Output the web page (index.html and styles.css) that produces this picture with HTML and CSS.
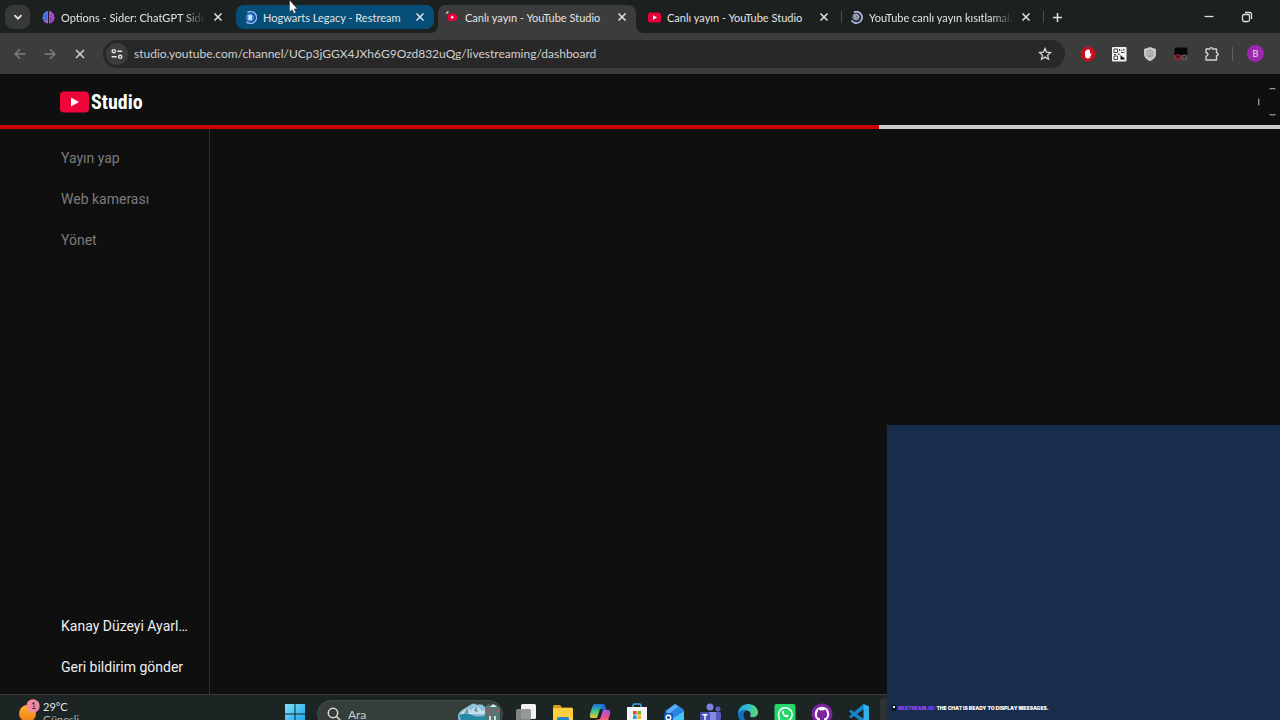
FILE: index.html
```html
<!DOCTYPE html>
<html lang="tr">
  <head>
    <meta charset="UTF-8" />
    <meta name="viewport" content="width=device-width, initial-scale=1.0" />
    <title>Canlı yayın - YouTube Studio</title>
    <link rel="stylesheet" href="styles.css">
  </head>
  <body>
    <!-- Browser tabs -->
    <div class="tabstrip">
      <button class="tab-search" aria-label="Sekmelerde ara">
        <svg width="10" height="10" viewBox="0 0 10 10"><path d="M1.500 3.200 5 6.700l3.500-3.500" fill="none" stroke="#e3e3e3" stroke-width="1.700"/></svg>
      </button>

      <div class="tab">
        <svg class="favicon" viewBox="0 0 13 13">
          <path d="M6 .6C4.500 0 3 .6 2.700 2 1.200 2.300.7 3.800 1.200 4.900 0 6 .2 8 1.300 8.700c-.1 1.500.9 2.500 2.100 2.500C4 12.700 5.500 12.700 6 12z" fill="#4d7df0"/>
          <path d="M7 .6C8.500 0 10 .6 10.300 2c1.500.3 2 1.800 1.500 2.900C13 6 12.800 8 11.700 8.700c.1 1.500-.9 2.500-2.100 2.500C9 12.700 7.500 12.700 7 12z" fill="#b44be0"/>
          <path d="M2.500 5.500 5 4M2.500 8.500 5 7M10.500 5.500 8 4M10.500 8.500 8 7M4.500 10.500V9M8.500 10.500V9" stroke="#2b1a55" stroke-width=".6" fill="none"/>
          <path d="M3 10c.5 1.500 2 2 3 1.500V9z" fill="#e0559c"/>
        </svg>
        <a href="#" class="tab-title fade">Options - Sider: ChatGPT Sidebar</a>
        <button class="tab-close" aria-label="Kapat"><svg width="10" height="10" viewBox="0 0 10 10"><path d="m1.500 1.500 7 7m0-7-7 7"/></svg></button>
      </div>

      <div class="tab grouped">
        <svg class="favicon" viewBox="0 0 13 13">
          <path d="M3.500 1.300A6 6 0 1 1 2.300 10.700" fill="none" stroke="#8fb8f5" stroke-width="1.400"/>
          <circle cx="6" cy="6.500" r="4.200" fill="#3f86e8"/>
          <path d="M4.300 4h2.600a1.500 1.500 0 0 1 .8 2.700L8.200 9H4.300z" fill="#cfe2ff"/>
        </svg>
        <a href="#" class="tab-title">Hogwarts Legacy - Restream</a>
        <button class="tab-close" aria-label="Kapat"><svg width="10" height="10" viewBox="0 0 10 10"><path d="m1.500 1.500 7 7m0-7-7 7"/></svg></button>
      </div>

      <div class="tab active">
        <svg class="favicon" viewBox="0 0 13 13">
          <path d="M.3 2.600A6 6 0 0 1 2.500.7" fill="none" stroke="#ddd" stroke-width="1.300"/>
          <rect x="1.500" y="2.500" width="9.500" height="7.500" rx="3" fill="#e5003c"/>
          <path d="m5.200 4.600 3 1.700-3 1.700z" fill="#fff"/>
        </svg>
        <a href="#" class="tab-title">Canlı yayın - YouTube Studio</a>
        <button class="tab-close" aria-label="Kapat"><svg width="10" height="10" viewBox="0 0 10 10"><path d="m1.500 1.500 7 7m0-7-7 7"/></svg></button>
      </div>

      <div class="tab divided">
        <svg class="favicon" viewBox="0 0 13 13">
          <rect x="0" y="1.500" width="13" height="10" rx="2.500" fill="#e5003c"/>
          <path d="m5 4.200 4 2.300-4 2.300z" fill="#fff"/>
        </svg>
        <a href="#" class="tab-title">Canlı yayın - YouTube Studio</a>
        <button class="tab-close" aria-label="Kapat"><svg width="10" height="10" viewBox="0 0 10 10"><path d="m1.500 1.500 7 7m0-7-7 7"/></svg></button>
      </div>

      <div class="tab divided">
        <svg class="favicon" viewBox="0 0 13 13">
          <path d="M4 1.200A5.700 5.700 0 1 1 1.500 9.300" fill="none" stroke="#b9c6ee" stroke-width="1.600"/>
          <circle cx="6" cy="6" r="3.800" fill="#6b7484"/>
          <path d="M3.500 5c1.500-1.500 4-1.500 4.800.2S6.500 8.500 5 7.500s0-2.300 1.200-2" fill="none" stroke="#d8dde6" stroke-width=".8"/>
        </svg>
        <a href="#" class="tab-title fade">YouTube canlı yayın kısıtlamaları</a>
        <button class="tab-close" aria-label="Kapat"><svg width="10" height="10" viewBox="0 0 10 10"><path d="m1.500 1.500 7 7m0-7-7 7"/></svg></button>
      </div>

      <button class="new-tab" aria-label="Yeni sekme">
        <svg width="11" height="11" viewBox="0 0 11 11"><path d="M5.500 1v9M1 5.500h9" stroke="#e3e3e3" stroke-width="1.500"/></svg>
      </button>

      <div class="window-controls">
        <button aria-label="Küçült"><svg width="12" height="12" viewBox="0 0 12 12"><path d="M1.500 5.500h9" stroke="#ddd" stroke-width="1.300"/></svg></button>
        <button aria-label="Geri yükle"><svg width="12" height="12" viewBox="0 0 12 12" fill="none" stroke="#ddd" stroke-width="1.300"><rect x="1.500" y="3.500" width="7" height="7" rx="1.500"/><path d="M4 1.500h4.500a2 2 0 0 1 2 2V8"/></svg></button>
      </div>
    </div>

    <!-- Address bar and extensions -->
    <div class="toolbar">
      <button class="tool-button dim" aria-label="Geri"><svg width="12" height="12" viewBox="0 0 12 12"><path d="M11.500 6H1.200M6 1.200 1.200 6 6 10.800"/></svg></button>
      <button class="tool-button dim" aria-label="İleri"><svg width="12" height="12" viewBox="0 0 12 12"><path d="M.5 6h10.300M6 1.200 10.800 6 6 10.800"/></svg></button>
      <button class="tool-button" aria-label="Durdur"><svg width="12" height="12" viewBox="0 0 12 12"><path d="m2 2 8 8m0-8-8 8"/></svg></button>

      <div class="omnibox">
        <button class="site-info" aria-label="Site bilgileri">
          <svg width="12" height="12" viewBox="0 0 12 12" fill="none" stroke="#e3e3e3" stroke-width="1.400"><circle cx="2.800" cy="3.200" r="1.600"/><path d="M6.300 3.200h5M.7 8.800h5"/><circle cx="9.200" cy="8.800" r="1.600"/></svg>
        </button>
        <input type="text" class="url" aria-label="Adres" value="studio.youtube.com/channel/UCp3jGGX4JXh6G9Ozd832uQg/livestreaming/dashboard" />
        <button class="bookmark" aria-label="Yer işareti">
          <svg width="14" height="14" viewBox="0 0 14 14"><path d="m7 1.500 1.600 3.700 4 .3-3 2.700.9 4L7 10.100l-3.500 2.100.9-4-3-2.700 4-.3z" fill="none" stroke="#d4d4d4" stroke-width="1.300"/></svg>
        </button>
      </div>

      <div class="extensions">
        <button aria-label="AdBlock">
          <svg width="16" height="16" viewBox="0 0 16 16"><path d="M5 .7h6L15.300 5v6L11 15.300H5L.7 11V5z" fill="#c4101f"/><path d="M5 8V5.300q.6-.8 1.200 0V4.200q.6-.8 1.200 0V3.500q.7-.8 1.300 0v.7q.7-.7 1.300.1V8l.7-.7q1-.2.8.7L10 11.600q-.6 1-2 1-2.600 0-3-2.600z" fill="#fff"/></svg>
        </button>
        <button aria-label="QR kodu">
          <svg width="16" height="16" viewBox="0 0 16 16"><rect x="1" y="1" width="14.500" height="14.500" rx="1" fill="#f2f2f2"/><path d="M3 3h3.500v3.500H3zM3 10h3.500v3.500H3z" fill="none" stroke="#444" stroke-width="1"/><path d="M8 3h1.200v2H8zM10 4h1v1h-1zM12 3h1.500v1.500H12zM10 6h3.500v1H10zM3 8h2v1H3zM7 7.500h1.500V9H7z" fill="#444"/><path d="M9.500 9v4.500h4.300q-.3-2.500-2.300-2.500z" fill="#111"/></svg>
        </button>
        <button aria-label="Koruma">
          <svg width="16" height="16" viewBox="0 0 16 16"><path d="m8 1 6 2v5c0 3.500-3 6-6 7.200C5 14 2 11.500 2 8V3z" fill="#c4c8cb"/><circle cx="8" cy="7.500" r="3.200" fill="none" stroke="#969ca0"/><path d="M9.200 6.200q-2-.7-2.300.5t1.300.9.8 1.500-2.300.3" fill="none" stroke="#8b9196" stroke-width=".9"/></svg>
        </button>
        <button aria-label="Kayıt">
          <svg width="16" height="16" viewBox="0 0 16 16"><path d="M1.500 3.500q0-2 2-2h9q2 0 2 2V9h-13z" fill="#050505"/><path d="M1.500 9h7v5.500h-6q-1 0-1-1z" fill="#7d2a38"/><path d="M8.500 9h6v4.500q0 1-1 1h-5z" fill="#454545"/><circle cx="5" cy="10.800" r="2.300" fill="#48131c" stroke="#a52a3c"/><circle cx="11.400" cy="11.200" r="2.300" fill="#333" stroke="#6a6a6a"/></svg>
        </button>
        <button aria-label="Uzantılar">
          <svg width="16" height="16" viewBox="0 0 16 16"><path d="M2 3h3.800q.3-1.400 1.500-1.400T8.800 3h3.700v3.700q1.700.2 1.700 1.500t-1.700 1.500V14H2v-3.900q1.900-.1 1.900-1.700T2 6.800z" fill="none" stroke="#d2d2d2" stroke-width="1.400" stroke-linejoin="round"/></svg>
        </button>
      </div>
      <button class="avatar">B</button>
    </div>

    <!-- Studio header -->
    <header class="studio-header">
      <a href="#" class="logo">
        <svg width="29" height="22" viewBox="0 0 29 22"><rect x="0" y="0.500" width="29" height="21" rx="4" fill="#f00538"/><path d="m11 6.500 8 4.500-8 4.500z" fill="#fff"/></svg>
        <span>Studio</span>
      </a>
      <svg width="22" height="30" viewBox="0 0 22 30" fill="none" stroke="#c8c8c8" stroke-linecap="round"><path d="M.8 12v6"/><path d="M12 1.800q2.500-.6 5 0M12 27.700q2.500.6 5 0"/></svg>
    </header>
    <div class="progress"><div class="progress-bar" style="width: 68.7%"></div></div>

    <div class="studio">
      <nav class="sidebar">
        <a href="#" class="menu-item">Yayın yap</a>
        <a href="#" class="menu-item">Web kamerası</a>
        <a href="#" class="menu-item">Yönet</a>
        <a href="#" class="menu-item bottom">Kanay Düzeyi Ayarl…</a>
        <a href="#" class="menu-item bright">Geri bildirim gönder</a>
      </nav>
      <main class="content"></main>
    </div>

    <!-- Windows taskbar -->
    <footer class="taskbar">
      <button class="weather">
        <svg width="24" height="26" viewBox="0 0 24 26">
          <defs><linearGradient id="sun" x2="0" y2="1"><stop stop-color="#ffb52e"/><stop offset="1" stop-color="#f07a12"/></linearGradient></defs>
          <circle cx="9.500" cy="15.500" r="8.500" fill="url(#sun)"/><circle cx="15" cy="8" r="6.700" fill="#f58a9e"/>
          <text x="13" y="11" class="badge-count">1</text>
        </svg>
        <span class="weather-text"><span>29°C</span><span class="weather-state">Güneşli</span></span>
      </button>

      <div class="apps">
        <button class="app" aria-label="Başlat">
          <svg viewBox="0 0 22 22"><defs><linearGradient id="win" x2="1" y2="1"><stop stop-color="#7fe0fb"/><stop offset="1" stop-color="#129fe8"/></linearGradient></defs><path d="M1 1h9.500v9.500H1zM11.500 1H21v9.500h-9.500zM1 11.500h9.500V21H1zM11.500 11.500H21V21h-9.500z" fill="url(#win)"/></svg>
        </button>
        <label class="search">
          <svg class="search-icon" viewBox="0 0 14 14"><circle cx="6" cy="6" r="4.700"/><path d="m9.500 9.500 3.700 3.700"/></svg>
          <input type="text" placeholder="Ara" />
          <svg class="search-art" viewBox="0 0 44 24">
            <path d="M0 13C3 7 8 6 12 3q4-3 7 0 5-2 8 2l4 3v16H4Q0 20 0 13z" fill="#8dc0d8"/>
            <path d="M2 12 9 6l4 3 5-6 6 6 4-2v5H2z" fill="#c4dfea"/><path d="m9 6 2 5-5 1zM18 3l2 7-4-1z" fill="#7397ab"/>
            <path d="M1 13q7-3 13 0t14 0v11H5z" fill="#278aa4"/>
            <path d="m27 5 4-3 4 3 2-3 5 4v18H27z" fill="#557772"/><path d="M28 8h5M37 9h5M30 12h4" stroke="#b0505c" stroke-width="1.500"/><path d="M31 14h2v6h-2zM36 14h2v6h-2z" fill="#cfd8d8"/><path d="m32 5 3-3 4 3" fill="#dfe9ec"/>
          </svg>
        </label>
        <button class="app" aria-label="Görev görünümü">
          <svg viewBox="0 0 22 22"><rect x="6" y="1" width="15" height="15" rx="1.500" fill="#f1f1f1"/><rect x="1" y="6" width="15" height="14" rx="1.500" fill="#8c8f8f" opacity=".9"/></svg>
        </button>
        <button class="app" aria-label="Dosya Gezgini">
          <svg viewBox="0 0 22 22"><path d="M1 3.500Q1 2 2.500 2H8l2 2.500h9.500Q21 4.500 21 6v5H1z" fill="#d79a1a"/><rect x="1" y="5" width="20" height="15" rx="1.500" fill="#fbce3f"/><path d="M5 20v-4q0-2 2-2h8q2 0 2 2v4z" fill="#1c83d3"/></svg>
        </button>
        <button class="app" aria-label="Copilot">
          <svg viewBox="0 0 22 22"><defs><linearGradient id="cpa" x2="0" y2="1"><stop stop-color="#1b6fe0"/><stop offset=".5" stop-color="#3cc58c"/><stop offset="1" stop-color="#f3c631"/></linearGradient><linearGradient id="cpb" x2="0" y2="1"><stop stop-color="#9a58ec"/><stop offset=".5" stop-color="#ef4d91"/><stop offset="1" stop-color="#fb8d45"/></linearGradient></defs><path d="M6 1h7q2 0 2.500 2l.5 2-5 1-3 9H3q-3 0-2-4L3.500 3Q4 1 6 1z" fill="url(#cpa)"/><path d="M16 21H9q-2 0-2.500-2L6 17l5-1 3-9h5q3 0 2 4l-2.500 8q-.5 2-2.500 2z" fill="url(#cpb)"/><path d="M12 1h2q2 0 2.500 3l1 3h-4z" fill="#2468d8"/></svg>
        </button>
        <button class="app" aria-label="Microsoft Store">
          <svg viewBox="0 0 22 22"><path d="M7 5V2.500Q7 1 8.500 1h5Q15 1 15 2.500V5" fill="none" stroke="#2aa8e8" stroke-width="1.600"/><path d="M1 4h20v14q0 3-3 3H4q-3 0-3-3z" fill="#f3f5f6"/><path d="M7 8h3.600v3.600H7z" fill="#e84e28"/><path d="M11.400 8H15v3.600h-3.600z" fill="#79b51c"/><path d="M7 12.400h3.600V16H7z" fill="#1c9fe4"/><path d="M11.400 12.400H15V16h-3.600z" fill="#f7b50c"/></svg>
        </button>
        <button class="app" aria-label="Outlook">
          <svg viewBox="0 0 22 22"><path d="M2 8 12 1l9 6v12q0 2-2 2H4q-2 0-2-2z" fill="#1d66cf"/><path d="M3 8 12 1l4 2.500L5 12z" fill="#59aff4"/><path d="m16 3.500 5 3.500L9 16l-4-4z" fill="#2b83e8"/><path d="m21 8-12 8 4 5h6q2 0 2-2z" fill="#43c5f4"/><rect x="1" y="10" width="9" height="9" rx="1.500" fill="#1458b8"/><circle cx="5.500" cy="14.500" r="2.300" fill="none" stroke="#fff" stroke-width="1.400"/></svg>
        </button>
        <button class="app" aria-label="Teams">
          <svg viewBox="0 0 22 22"><circle cx="10" cy="4" r="3.500" fill="#7d80dd"/><circle cx="18" cy="6" r="2.500" fill="#5b5fc7"/><path d="M13 9h6.500Q21 9 21 10.500V15q0 4-4 4h-4z" fill="#5459be"/><path d="M5 9h11v8q0 4-5 4t-6-4z" fill="#8589e8"/><rect x="0" y="9" width="10" height="10" rx="1.500" fill="#4950b5"/><path d="M2.500 11.700h5M5 11.700V17" stroke="#fff" stroke-width="1.400"/></svg>
        </button>
        <button class="app" aria-label="Edge">
          <svg viewBox="0 0 22 22"><defs><linearGradient id="edge" x2="1"><stop stop-color="#249ee4"/><stop offset=".55" stop-color="#35bfc9"/><stop offset="1" stop-color="#61db62"/></linearGradient></defs><path d="M1 11C1 5 5.500 1 11.200 1 17 1 21 5 21 9.500c0 3-2.400 4.800-5.200 4.800-2 0-3-.8-2.500-1.800 1-2-.4-5-4-5C5 7.500 1.500 9.500 1 13z" fill="url(#edge)"/><path d="M1 11c1-3 5-4.500 8-3-3 1.500-3 5-1.500 8 1.500 2.600 5 4 8.500 3.200C9.500 23.500 1 19 1 11z" fill="#1470c6"/></svg>
        </button>
        <button class="app" aria-label="WhatsApp">
          <svg viewBox="0 0 22 22"><rect x="0.500" y="1" width="21" height="21" rx="2" fill="#21d767"/><path d="m4.500 18.500 1-3.500a6.800 6.800 0 1 1 2.600 2.500z" fill="none" stroke="#fff" stroke-width="1.500"/><path d="M8.300 8q.8-1 1.400 0l.5 1.300-.6.8q.8 1.600 2.400 2.300l.8-.8 1.700.8q.2 1.500-1.300 1.900c-2.700.3-6-3.300-4.900-6.300z" fill="#fff"/></svg>
        </button>
        <button class="app" aria-label="GitHub">
          <svg viewBox="0 0 22 22"><circle cx="11" cy="11" r="10.500" fill="#7b249b"/><circle cx="11" cy="11" r="7.300" fill="#fff"/><path d="M9 19v-3.500Q5.800 15 5.800 11.500q0-1.700 1-2.700-.3-1.200.2-2.300 1.200.1 2.200.9 1.800-.4 3.600 0 1-.8 2.200-.9.500 1.100.2 2.300 1 1 1 2.700 0 3.500-3.200 4V19z" fill="#7b249b"/></svg>
        </button>
        <button class="app" aria-label="Visual Studio Code">
          <svg viewBox="0 0 22 22"><path d="m15.500 1 5.500 2.500v15L15.500 21 1 8.500l2-1.800L16 16V6L3 15.300l-2-1.800z" fill="#1686cf"/><path d="m15.500 1 5.500 2.500v15L15.500 21z" fill="#35aef2"/></svg>
        </button>
        <button class="app running" aria-label="OBS Studio"></button>
      </div>
    </footer>

    <!-- Stream chat overlay -->
    <aside class="chat">
      <svg width="4" height="6" viewBox="0 0 4 6"><rect width="4" height="6" rx="1" fill="#07101e"/><path d="M1 1h2v2H1z" fill="#eee"/></svg>
      <p><span class="chat-author">RESTREAM.IO:</span> THE CHAT IS READY TO DISPLAY MESSAGES.</p>
    </aside>

    <svg class="cursor" width="12" height="16" viewBox="0 0 12 16"><path d="M.5 0v12l2.700-2.300L5 13.500l2-.9-1.800-3.700h3.300z" fill="#fff" stroke="#222" stroke-width=".5"/></svg>
  </body>
</html>
```
FILE: styles.css
```css
* {
  box-sizing: border-box;
}

body {
  margin: 0;
  height: 100vh;
  display: flex;
  flex-direction: column;
  overflow: hidden;
  position: relative;
  background-color: #0f0f0f;
  color: #e3e3e3;
  font-family: Lato, sans-serif;
  font-size: 11px;
}

button {
  display: flex;
  align-items: center;
  justify-content: center;
  padding: 0;
  border: none;
  background: none;
  color: inherit;
  font: inherit;
}

a {
  color: inherit;
  text-decoration: none;
}

svg {
  flex-shrink: 0;
}

/* Tab strip */
.tabstrip {
  height: 33px;
  flex-shrink: 0;
  display: flex;
  align-items: flex-start;
  gap: 4px;
  padding: 5px 19px 0 5px;
  background-color: #1c211f;
}

.tab-search {
  width: 25px;
  height: 24px;
  border-radius: 8px;
  background-color: #363938;
}

.tab {
  width: 198px;
  height: 24px;
  display: flex;
  align-items: center;
  gap: 6px;
  padding: 0 7px 0 8px;
  border-radius: 8px;
  position: relative;
}

.favicon {
  width: 13px;
  height: 13px;
}

.tab-title {
  flex: 1;
  overflow: hidden;
  white-space: nowrap;
}

.tab-title.fade {
  mask-image: linear-gradient(to right, #000 85%, transparent);
}

.tab-close {
  width: 14px;
  height: 14px;
}

.tab-close path {
  stroke: #e3e3e3;
  stroke-width: 1.5;
}

.tab.grouped {
  background-color: #064e78;
}

.tab.active {
  height: 28px;
  padding-bottom: 4px;
  border-radius: 8px 8px 0 0;
  background-color: #3c3c3c;
}

.tab.active::before,
.tab.active::after {
  content: "";
  position: absolute;
  bottom: 0;
  width: 8px;
  height: 8px;
}

.tab.active::before {
  right: 100%;
  background: radial-gradient(circle at 0 0, transparent 8px, #3c3c3c 8px);
}

.tab.active::after {
  left: 100%;
  background: radial-gradient(circle at 100% 0, transparent 8px, #3c3c3c 8px);
}

.tab.divided::after {
  content: "";
  position: absolute;
  right: -4px;
  width: 1px;
  height: 12px;
  background-color: #4a4d4c;
}

.new-tab {
  width: 26px;
  height: 24px;
}

.window-controls {
  margin-left: auto;
  display: flex;
  gap: 10px;
}

.window-controls button {
  width: 28px;
  height: 24px;
}

/* Toolbar */
.toolbar {
  height: 41px;
  flex-shrink: 0;
  display: flex;
  align-items: center;
  padding: 0 9px 0 5px;
  background-color: #3c3c3c;
}

.tool-button {
  width: 30px;
  height: 28px;
}

.tool-button path {
  fill: none;
  stroke: #d4d4d4;
  stroke-width: 1.5;
}

.tool-button.dim path {
  stroke: #7d7d7d;
}

.omnibox {
  flex: 1;
  height: 28px;
  display: flex;
  align-items: center;
  gap: 6px;
  margin: 0 7px 0 8px;
  padding: 0 13px 0 3px;
  border-radius: 14px;
  background-color: #282828;
}

.site-info {
  width: 22px;
  height: 22px;
  border-radius: 11px;
  background-color: #3c3c3c;
}

.url {
  flex: 1;
  min-width: 0;
  padding: 0;
  border: none;
  outline: none;
  background: none;
  color: #d0d0d0;
  font-family: Lato, sans-serif;
  font-size: 12px;
}

.extensions {
  display: flex;
}

.extensions button {
  width: 31px;
  height: 28px;
}

.avatar {
  width: 17px;
  height: 17px;
  margin: 0 7px 0 20px;
  border-radius: 50%;
  background-color: #9c27b0;
  font-size: 9px;
  position: relative;
}

.avatar::before {
  content: "";
  position: absolute;
  left: -15px;
  width: 1px;
  height: 14px;
  background-color: #5f6163;
}

/* Studio header */
.studio-header {
  height: 51px;
  flex-shrink: 0;
  display: flex;
  align-items: center;
  justify-content: space-between;
  padding: 4px 0 0 60px;
}

.logo {
  display: flex;
  align-items: center;
  gap: 2px;
  color: #fff;
  font-family: "Liberation Sans Narrow", "Roboto Condensed", Roboto, sans-serif;
  font-size: 20px;
  font-weight: bold;
  line-height: 24px;
}

.progress {
  height: 4px;
  flex-shrink: 0;
  background-color: #ccc;
}

.progress-bar {
  height: 100%;
  background-color: #cc0000;
}

/* Studio body */
.studio {
  flex: 1;
  min-height: 0;
  display: flex;
}

.sidebar {
  width: 210px;
  display: flex;
  flex-direction: column;
  padding: 9px 0 6px;
  border-right: 1px solid #303030;
  font-family: Roboto, sans-serif;
  font-size: 14px;
}

.menu-item {
  padding: 0 20px 0 61px;
  line-height: 41px;
  white-space: nowrap;
  color: #7c7c7c;
}

.menu-item.bottom {
  margin-top: auto;
  color: #eee;
}

.menu-item.bright {
  color: #eee;
}

.content {
  flex: 1;
}

/* Taskbar */
.taskbar {
  height: 26px;
  flex-shrink: 0;
  display: flex;
  align-items: flex-start;
  overflow: hidden;
  border-top: 1px solid #343c3a;
  background-color: #1c2523;
}

.weather {
  width: 276px;
  height: 40px;
  flex-shrink: 0;
  align-items: flex-start;
  justify-content: flex-start;
  gap: 1px;
  padding: 3px 0 0 18px;
}

.badge-count {
  fill: #4a1c28;
  font-size: 9px;
}

.weather-text {
  display: flex;
  flex-direction: column;
  padding-top: 2px;
  line-height: 13px;
  text-align: left;
}

.weather-state {
  color: #aab0ae;
}

.apps {
  display: flex;
}

.app {
  width: 37px;
  height: 38px;
}

.app svg {
  width: 22px;
  height: 22px;
}

.app.running {
  border-radius: 4px;
  margin: 3px 0 0 3px;
  background-color: #2c3431;
}

.search {
  width: 186px;
  height: 28px;
  display: flex;
  align-items: center;
  gap: 7px;
  margin: 5px 4px 0;
  padding-left: 9px;
  border: 1px solid #454c4a;
  border-radius: 14px;
  background-color: #363e3c;
}

.search-icon {
  width: 14px;
  height: 14px;
  fill: none;
  stroke: #ddd;
  stroke-width: 1.5;
}

.search input {
  flex: 1;
  min-width: 0;
  padding: 0;
  border: none;
  background: none;
  font: inherit;
  font-size: 12px;
}

.search input::placeholder {
  color: #c8cccb;
}

.search-art {
  width: 44px;
  height: 24px;
}

/* Chat overlay */
.chat {
  position: absolute;
  right: 0;
  bottom: 0;
  width: 393px;
  height: 295px;
  display: flex;
  align-items: flex-end;
  gap: 2px;
  padding: 0 5px 9px;
  background-color: #182c4c;
  color: #fff;
  font-family: Inter, sans-serif;
  font-size: 5px;
  font-weight: 900;
}

.chat p {
  margin: 0;
  line-height: 6px;
}

.chat-author {
  color: #9147ff;
}

.cursor {
  position: absolute;
  top: 0;
  left: 289px;
}
```
